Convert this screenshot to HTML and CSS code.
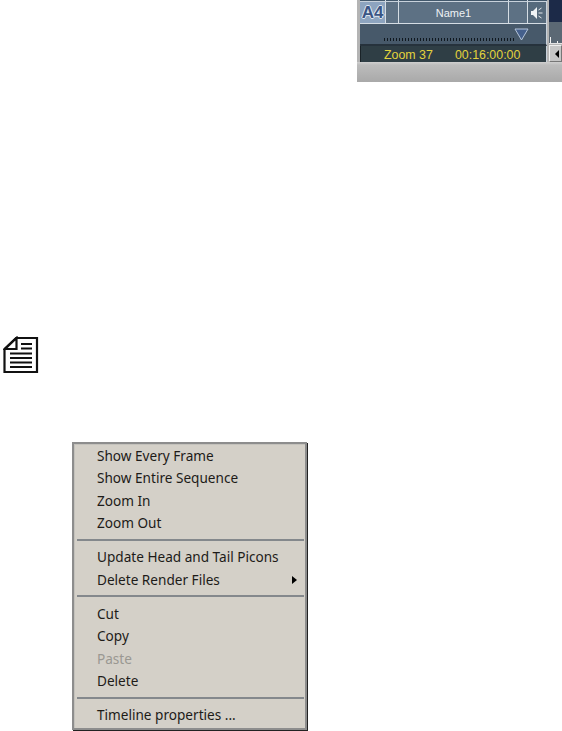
FILE: index.html
```html
<!DOCTYPE html>
<html lang="en">
<head>
<meta charset="utf-8">
<title>Timeline</title>
<link rel="stylesheet" href="styles.css">
</head>
<body>
<div class="top">
  <div class="timeline">
    <div class="main">
      <div class="band"><span class="tick t1"></span><span class="tick t2"></span><span class="tick t3"></span><span class="tick t4"></span></div>
      <div class="track">
        <span class="cell a4">A4</span>
        <span class="cell narrow"></span>
        <span class="cell name">Name1</span>
        <span class="cell narrow2"></span>
        <span class="cell spk">
          <svg width="14" height="14" viewBox="0 0 14 14"><path d="M1 5h2l4-4v12l-4-4H1z" fill="#f0f3f5"/><path d="M8.500 4l3-2M8.500 7h4M8.500 10l3 2" stroke="#e4e8ec" fill="none"/></svg>
        </span>
      </div>
      <div class="ruler">
        <div class="dots"></div>
        <svg class="tri" width="15" height="13" viewBox="0 0 15 13"><path d="M1 1h13L7.500 12z" fill="#45608c" stroke="#b4c4da"/></svg>
      </div>
      <div class="status"><span>Zoom 37</span><span>00:16:00:00</span></div>
    </div>
    <div class="side">
      <div class="side-dark"></div>
      <div class="side-grey"><span class="mark m1"></span><span class="mark m2"></span></div>
      <div class="scroll"><span class="arrow"></span></div>
    </div>
  </div>
  <div class="foot"></div>
</div>
<svg class="note" width="36" height="38" viewBox="0 0 36 38">
  <path d="M13 2h21v34H1.500V13z" fill="#fff" stroke="#111" stroke-width="2.2"/>
  <path d="M13.500 2v11H2z" fill="#fff" stroke="#111" stroke-width="2.2"/>
  <path d="M18 8h11M18 12.500h11M7 17.500h22M7 22h22M7 26.500h22M7 31h22" stroke="#111" stroke-width="1.8"/>
</svg>
<div class="menu">
  <div class="item">Show Every Frame</div>
  <div class="item">Show Entire Sequence</div>
  <div class="item">Zoom In</div>
  <div class="item">Zoom Out</div>
  <div class="sep"></div>
  <div class="item">Update Head and Tail Picons</div>
  <div class="item sub">Delete Render Files<span class="caret"></span></div>
  <div class="sep"></div>
  <div class="item">Cut</div>
  <div class="item">Copy</div>
  <div class="item off">Paste</div>
  <div class="item">Delete</div>
  <div class="sep"></div>
  <div class="item">Timeline properties ...</div>
</div>
</body>
</html>
```
FILE: styles.css
```css
html, body { margin: 0; padding: 0; background: #fff; }
body { width: 562px; height: 731px; overflow: hidden; font-family: "Liberation Sans", Arial, sans-serif; }
.top { margin-left: 357px; width: 205px; height: 82px; background: #b4b4b4; }
.timeline { display: flex; height: 62px; }
.main { width: 187px; margin-left: 3px; }
.band { height: 1px; background: #42586c; position: relative; }
.tick { position: absolute; top: 0; width: 1px; height: 1px; background: #d5dde4; }
.t1 { left: 25px; }
.t2 { left: 38px; }
.t3 { left: 148px; }
.t4 { left: 167px; }
.track { height: 23px; display: flex; background: #5d7184; border-top: 1px solid #c8d2dc; border-bottom: 1px solid #d5dde4; box-sizing: border-box; }
.cell { display: flex; align-items: center; justify-content: center; padding-top: 1px; border-right: 1px solid #d5dde4; box-sizing: border-box; color: #eef2f5; font-size: 11px; }
.a4 { width: 26px; background: #8da4bf; color: #3a5585; font-weight: bold; font-size: 17px; text-shadow: 1px 0 0 #dfe7f0, -1px 0 0 #dfe7f0, 0 1px 0 #dfe7f0, 0 -1px 0 #dfe7f0; }
.narrow { width: 13px; }
.name { width: 110px; }
.narrow2 { width: 19px; }
.spk { width: 19px; background: #566a7c; border-right: 1px solid #c8d2dc; }
.ruler { height: 22px; background: #47596a; border-right: 1px solid #c8d2dc; border-bottom: 2px solid #26323c; box-sizing: border-box; position: relative; }
.dots { position: absolute; left: 24px; top: 14px; width: 131px; height: 3px; background: repeating-linear-gradient(90deg, #10181f 0 1px, transparent 1px 3px); }
.tri { position: absolute; left: 154px; top: 4px; }
.status { height: 16px; background: #2f3e45; color: #e3d33c; font-size: 12.4px; line-height: 18px; display: flex; gap: 22px; padding-left: 23px; border-left: 1px solid #1a2328; border-right: 1px solid #c8d2dc; box-sizing: border-box; }
.side { width: 13px; margin-left: 2px; display: flex; flex-direction: column; }
.side-dark { height: 22px; background: #1c2a48; }
.side-grey { height: 22px; background: #5b6874; border-bottom: 1px solid #e4e4e4; box-sizing: border-box; position: relative; }
.mark { position: absolute; bottom: 0; width: 1px; background: #f2f2f2; }
.m1 { left: 1px; height: 6px; }
.m2 { left: 8px; height: 2px; }
.scroll { height: 17px; margin-top: 1px; background: #c6c6c6; display: flex; align-items: center; padding-left: 5px; border: 1px solid #eee; border-right-color: #777; border-bottom-color: #777; box-sizing: border-box; }
.arrow { width: 0; height: 0; border: 4px solid transparent; border-right-color: #000; border-left: 0; }
.foot { height: 20px; background: linear-gradient(#d0d0d0 0, #bcbcbc 3px, #a9a9a9 20px); }
.note { display: block; margin: 254px 0 0 3px; }
.menu { width: 235px; height: 288px; margin: 68px 0 0 72px; box-sizing: border-box; background: #d4d0c8; border: 2px solid #8d8d8d; box-shadow: inset 1px 1px 0 #c4c2bc, 1px 1px 0 #222; padding: 1px 0 0 0; color: #1d1b18; font-family: "Noto Sans", sans-serif; font-size: 13.6px; }
.item { height: 22.4px; line-height: 22px; padding-left: 23px; position: relative; }
.off { color: #9a9892; }
.sep { height: 2px; margin: 4px 1px 5.8px 3px; background: #84888c; }
.caret { position: absolute; right: 8px; top: 7px; width: 0; height: 0; border: 4px solid transparent; border-left: 5px solid #000; border-right: 0; }
```
